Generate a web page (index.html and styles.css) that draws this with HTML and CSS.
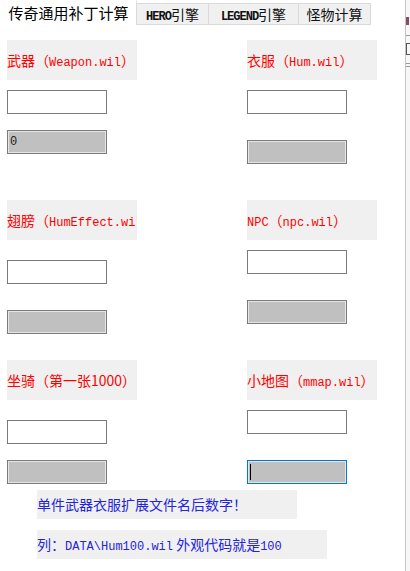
FILE: index.html
```html
<!DOCTYPE html>
<html>
  <head>
  <meta charset="UTF-8">
  <title>传奇通用补丁计算</title>
  <link rel="stylesheet" href="styles.css">
  </head>
  <body>
    <div class="window">
      <div class="main">
        <div class="tabs">
          <div class="tab active">传奇通用补丁计算</div>
          <div class="tab w72"><span class="en">HERO</span>引擎</div>
          <div class="tab w90"><span class="en">LEGEND</span>引擎</div>
          <div class="tab w72">怪物计算</div>
        </div>
        <div class="page">
          <div class="cols">
            <div class="col">
              <div class="label">武器（<span class="en">Weapon.wil</span>）</div>
              <input type="text" class="field m10">
              <div class="field out m16">0</div>
              <div class="label m46">翅膀（<span class="en">HumEffect.wil</span>）</div>
              <input type="text" class="field m20">
              <div class="field out m26"></div>
              <div class="label m26">坐骑（第一张1000）</div>
              <input type="text" class="field m20">
              <div class="field out m16"></div>
            </div>
            <div class="col">
              <div class="label">衣服（<span class="en">Hum.wil</span>）</div>
              <input type="text" class="field m10">
              <div class="field out m26"></div>
              <div class="label m36"><span class="en">NPC</span>（<span class="en">npc.wil</span>）</div>
              <input type="text" class="field m10">
              <div class="field out m26"></div>
              <div class="label m36">小地图（<span class="en">mmap.wil</span>）</div>
              <input type="text" class="field m10">
              <div class="field out focus m26"><span class="caret"></span></div>
            </div>
          </div>
          <div class="notes">
            <div class="note m6">单件武器衣服扩展文件名后数字！</div>
            <div class="note wide m11">列：<span class="en">DATA\Hum100.wil</span> 外观代码就是<span class="en">100</span></div>
          </div>
        </div>
      </div>
      <div class="edge">
        <div class="edge-mark"></div>
        <div class="edge-line m10"></div>
        <div class="edge-box"></div>
        <div class="edge-line m8"></div>
        <div class="edge-line m2"></div>
      </div>
    </div>
  </body>
</html>
```

FILE: styles.css
```css
body {
    margin: 0;
    background: #fff;
    font-family: "Noto Sans CJK SC", sans-serif;
}

.window {
    display: flex;
    height: 571px;
}

.main {
    width: 405px;
}

/* tab strip */
.tabs {
    display: flex;
    align-items: flex-end;
    height: 25px;
}

.tab {
    box-sizing: border-box;
    height: 22px;
    border: 1px solid #d9d9d9;
    background: #f0f0f0;
    color: #111;
    font-size: 14px;
    line-height: 20px;
    text-align: center;
    white-space: nowrap;
    margin-right: -1px;
}

.tab .en {
    font-size: 12px;
    font-weight: bold;
    letter-spacing: -1px;
}

.tab.active {
    width: 137px;
    height: 25px;
    background: #fff;
    border-color: #fff #e4e4e4 #fff #fff;
    font-size: 15px;
    line-height: 24px;
    color: #000;
}

.w72 {
    width: 73px;
}

.w90 {
    width: 91px;
}

.en {
    font-family: "Liberation Mono", monospace;
    font-size: 12px;
}

/* page */
.page {
    padding-left: 7px;
}

.cols {
    display: grid;
    grid-template-columns: 240px 130px;
    padding-top: 15px;
}

.label {
    width: 130px;
    height: 40px;
    line-height: 40px;
    background: #f0f0f0;
    color: #f00;
    font-size: 14px;
    white-space: nowrap;
    overflow: hidden;
}

.field {
    display: block;
    box-sizing: border-box;
    width: 100px;
    height: 24px;
    margin-bottom: 0;
    padding: 0;
    border: 1px solid #7a7a7a;
    background: #fff;
    outline: none;
}

.out {
    background: #c0c0c0;
    box-shadow: inset 0 0 0 1px #e6e6e6;
    font-family: "Liberation Mono", monospace;
    font-size: 12px;
    line-height: 22px;
    padding-left: 2px;
    color: #222;
}

.focus {
    border-color: #0078d7;
}

.caret {
    display: inline-block;
    width: 1px;
    height: 16px;
    margin-top: 3px;
    background: #000;
    vertical-align: top;
}

.notes {
    padding-left: 30px;
}

.note {
    width: 260px;
    height: 29px;
    line-height: 29px;
    background: #f0f0f0;
    color: #2424dc;
    font-size: 14px;
    white-space: nowrap;
}

.note.wide {
    width: 290px;
}

.note .en {
    font-size: 12px;
}

/* neighbouring window sliver */
.edge {
    flex: 1;
    border-left: 1px solid #c4c4c4;
    background: #f7f7f7;
    padding-top: 17px;
}

.edge-mark {
    width: 3px;
    height: 8px;
    background: #8a4a6a;
}

.edge-line {
    height: 1px;
    background: #9a9a9a;
}

.edge-box {
    height: 10px;
    margin-top: 7px;
    border: 1px solid #555;
    border-right: none;
}

.m2 { margin-top: 2px; }
.m6 { margin-top: 6px; }
.m8 { margin-top: 8px; }
.m10 { margin-top: 10px; }
.m11 { margin-top: 11px; }
.m16 { margin-top: 16px; }
.m20 { margin-top: 20px; }
.m26 { margin-top: 26px; }
.m36 { margin-top: 36px; }
.m46 { margin-top: 46px; }
```
